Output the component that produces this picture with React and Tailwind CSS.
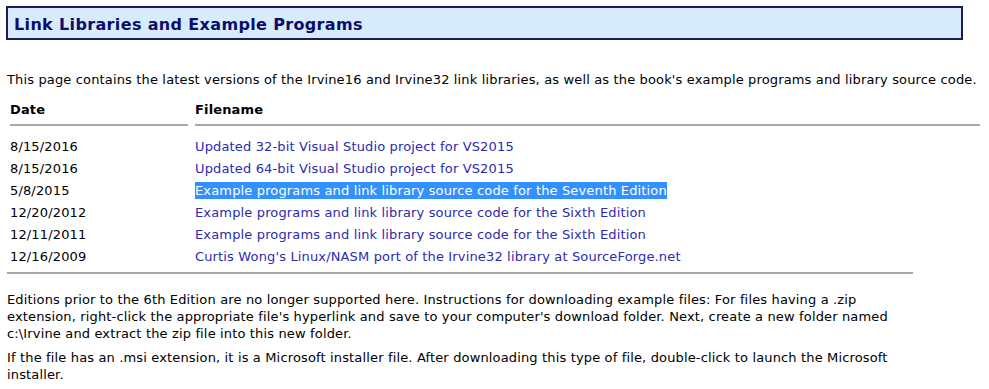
const ROWS = [
  { date: '8/15/2016', name: 'Updated 32-bit Visual Studio project for VS2015' },
  { date: '8/15/2016', name: 'Updated 64-bit Visual Studio project for VS2015' },
  { date: '5/8/2015', name: 'Example programs and link library source code for the Seventh Edition', selected: true },
  { date: '12/20/2012', name: 'Example programs and link library source code for the Sixth Edition' },
  { date: '12/11/2011', name: 'Example programs and link library source code for the Sixth Edition' },
  { date: '12/16/2009', name: "Curtis Wong's Linux/NASM port of the Irvine32 library at SourceForge.net" },
];

export default function App() {
  return (
    <div className="w-[989px] h-[389px] overflow-hidden bg-white text-[13px] leading-[17px] tracking-[0.15px] text-black" style={{ fontFamily: '"DejaVu Sans", Verdana, sans-serif' }}>
      {/* title bar */}
      <div className="ml-[6px] mt-[6px] w-[957px] h-[34px] border-2 border-[#1c1c55] bg-[#d6ebfb] pl-[6px] pt-[2px] flex items-center">
        <h1 className="text-[16px] font-bold tracking-[0.35px] text-[#0c0c6b]">Link Libraries and Example Programs</h1>
      </div>

      <p className="ml-[7px] mt-[31px] whitespace-nowrap">
        This page contains the latest versions of the Irvine16 and Irvine32 link libraries, as well as the book's example programs and library source code.
      </p>

      {/* file table */}
      <div className="ml-[10px] mt-[13px] w-[970px]">
        <div className="flex gap-[7px] font-bold">
          <div className="w-[178px] pb-[6px] border-b-2 border-[#a8a8a8]">Date</div>
          <div className="flex-1 pb-[6px] border-b-2 border-[#a8a8a8]">Filename</div>
        </div>
        <div className="mt-[12px] flex flex-col gap-[5px]">
          {ROWS.map((r, i) => (
            <div key={i} className="flex gap-[7px]">
              <div className="w-[178px]">{r.date}</div>
              <div className="flex-1">
                <span className={r.selected ? 'bg-[#3390ff] text-white py-[1px]' : 'text-[#2b2bb0]'}>{r.name}</span>
              </div>
            </div>
          ))}
        </div>
      </div>

      <div className="ml-[7px] mt-[7px] w-[906px] border-t-2 border-[#a8a8a8]" />

      <p className="ml-[7px] mt-[17px] w-[895px]">
        Editions prior to the 6th Edition are no longer supported here. Instructions for downloading example files: For files having a .zip extension, right-click the appropriate file's hyperlink and save to your computer's download folder. Next, create a new folder named c:\Irvine and extract the zip file into this new folder.
      </p>
      <p className="ml-[7px] mt-[7px] w-[895px]">
        If the file has an .msi extension, it is a Microsoft installer file. After downloading this type of file, double-click to launch the Microsoft installer.
      </p>
    </div>
  );
}
